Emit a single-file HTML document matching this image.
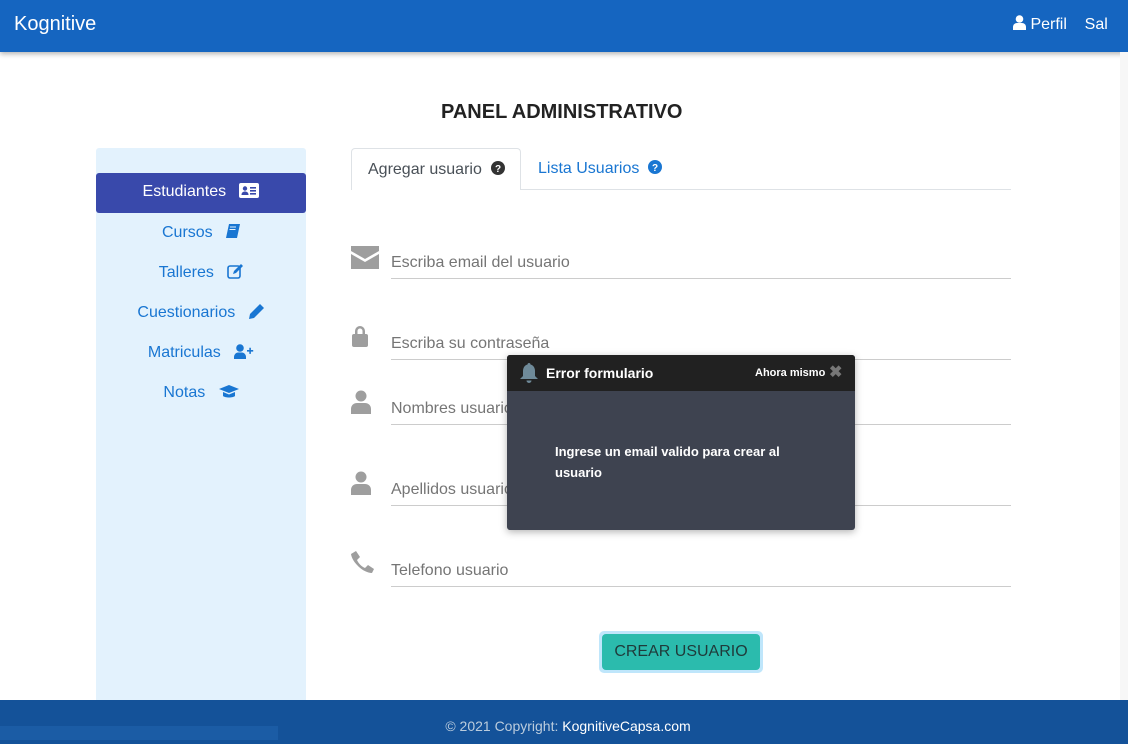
<!DOCTYPE html>
<html><head><meta charset="utf-8"><style>
*{margin:0;padding:0;box-sizing:border-box}
body{width:1128px;height:744px;position:relative;overflow:hidden;background:#fff;font-family:"Liberation Sans",sans-serif}
.a{position:absolute}
.hdr{left:0;top:0;width:1128px;height:52px;background:#1565c0;box-shadow:0 2px 5px rgba(0,0,0,.3)}
.side{left:96px;top:148px;width:210px;height:560px;background:#e3f2fd;border-radius:3px}
.nav{position:absolute;left:0;width:210px;text-align:center;color:#1976d2;font-size:16px;line-height:40px}
.fld{position:absolute;left:391px;width:620px;border-bottom:1px solid #ccc;color:#757575;font-size:16px;height:30px;line-height:28px}
.ic{position:absolute;fill:#9e9e9e}
</style></head><body>
<div class="a hdr"></div>
<div class="a" style="left:14px;top:13px;color:#fff;font-size:20px">Kognitive</div>
<div class="a" style="left:1013px;top:15px;color:#fff;font-size:16px"><svg width="13" height="15" viewBox="0 0 13 15" style="vertical-align:-1px;fill:#fff"><circle cx="6.5" cy="4" r="3.8"/><path d="M0 15v-3c0-2.5 2-4 4-4h5c2 0 4 1.5 4 4v3z"/></svg> Perfil &nbsp;&nbsp; Sal</div>
<div class="a" style="left:1120px;top:52px;width:8px;height:648px;background:#f7f7f7"></div>
<div class="a" style="left:441px;top:101px;font-size:20px;font-weight:bold;color:#222">PANEL ADMINISTRATIVO</div>
<div class="a side">
<div class="nav" style="top:25px;height:40px;background:#3949ab;color:#fff;border-radius:3px;line-height:38px">Estudiantes &nbsp;&nbsp;<svg width="20" height="15" viewBox="0 0 20 15" style="vertical-align:-2px"><rect width="20" height="15" rx="2" fill="#fff"/><circle cx="6" cy="5.5" r="2.2" fill="#3949ab"/><path d="M2.5 12c0-2.5 1.5-3.5 3.5-3.5s3.5 1 3.5 3.5z" fill="#3949ab"/><rect x="11" y="4" width="6" height="1.6" fill="#3949ab"/><rect x="11" y="7" width="6" height="1.6" fill="#3949ab"/><rect x="11" y="10" width="6" height="1.6" fill="#3949ab"/></svg></div>
<div class="nav" style="top:65px">Cursos &nbsp;&nbsp;<svg width="14" height="15" viewBox="0 0 14 15" style="vertical-align:-2px;fill:#1976d2"><path d="M3 0h11l-3 14H0z"/><path d="M4 3h6M3.5 5.5h6" stroke="#e3f2fd" stroke-width="1"/></svg></div>
<div class="nav" style="top:105px">Talleres &nbsp;&nbsp;<svg width="16" height="15" viewBox="0 0 16 15" style="vertical-align:-2px"><rect x="1" y="2" width="12" height="12" rx="2" fill="none" stroke="#1976d2" stroke-width="1.6"/><path d="M6 10l1-3 7-7 2 2-7 7z" fill="#1976d2"/></svg></div>
<div class="nav" style="top:145px">Cuestionarios &nbsp;&nbsp;<svg width="16" height="16" viewBox="0 0 16 16" style="vertical-align:-2px;fill:#1976d2"><path d="M0 16l1-5L11 1l4 4L5 15z"/></svg></div>
<div class="nav" style="top:185px">Matriculas &nbsp;&nbsp;<svg width="20" height="15" viewBox="0 0 20 15" style="vertical-align:-2px;fill:#1976d2"><circle cx="6" cy="4" r="3.8"/><path d="M0 15v-2c0-2.5 2-4.5 4-4.5h4c2 0 4 2 4 4.5v2z"/><path d="M13 6h2.3V3.7h1.6V6h2.3v1.6h-2.3v2.3h-1.6V7.6H13z"/></svg></div>
<div class="nav" style="top:225px">Notas &nbsp;&nbsp;<svg width="20" height="15" viewBox="0 0 20 15" style="vertical-align:-2px;fill:#1976d2"><path d="M10 1L0 5l10 4 10-4z"/><path d="M4 8v4c2 2 10 2 12 0V8l-6 2.5z"/></svg></div>
</div>
<!-- tabs -->
<div class="a" style="left:351px;top:189px;width:660px;border-bottom:1px solid #dee2e6"></div>
<div class="a" style="left:351px;top:148px;width:170px;height:42px;border:1px solid #dee2e6;border-bottom:none;background:#fff;border-radius:4px 4px 0 0;color:#495057;font-size:16px;line-height:41px;padding-left:16px">Agregar usuario &nbsp;<svg width="14" height="14" viewBox="0 0 14 14" style="vertical-align:-1px"><circle cx="7" cy="7" r="7" fill="#333"/><text x="7" y="11" text-anchor="middle" font-size="10" font-weight="bold" fill="#fff" font-family="Liberation Sans">?</text></svg></div>
<div class="a" style="left:538px;top:149px;color:#1976d2;font-size:16px;line-height:40px">Lista Usuarios &nbsp;<svg width="14" height="14" viewBox="0 0 14 14" style="vertical-align:-1px"><circle cx="7" cy="7" r="7" fill="#1976d2"/><text x="7" y="11" text-anchor="middle" font-size="10" font-weight="bold" fill="#fff" font-family="Liberation Sans">?</text></svg></div>
<!-- fields -->
<div class="fld" style="top:249px">Escriba email del usuario</div>
<div class="fld" style="top:330px">Escriba su contraseña</div>
<div class="fld" style="top:395px">Nombres usuario</div>
<div class="fld" style="top:476px">Apellidos usuario</div>
<div class="fld" style="top:557px">Telefono usuario</div>
<svg class="ic" style="left:351px;top:246px" width="28" height="23" viewBox="0 0 28 23"><path d="M0 0h28v5L14 13 0 5z"/><path d="M0 8l14 8 14-8v15H0z"/></svg>
<svg class="ic" style="left:351px;top:324px" width="18" height="23" viewBox="0 0 18 23"><path d="M4 10V7a5 5 0 0110 0v3h-2.5V7a2.5 2.5 0 00-5 0v3z"/><rect x="1" y="10" width="16" height="13" rx="2"/></svg>
<svg class="ic" style="left:351px;top:390px" width="20" height="24" viewBox="0 0 20 24"><circle cx="10" cy="6" r="5.5"/><path d="M0 24v-5c0-4 3-6 6-6h8c3 0 6 2 6 6v5z"/></svg>
<svg class="ic" style="left:351px;top:471px" width="20" height="24" viewBox="0 0 20 24"><circle cx="10" cy="6" r="5.5"/><path d="M0 24v-5c0-4 3-6 6-6h8c3 0 6 2 6 6v5z"/></svg>
<svg class="ic" style="left:351px;top:551px" width="23" height="23" viewBox="0 0 23 23"><path d="M5 0l4 6-3 3c1.5 3.5 4.5 6.5 8 8l3-3 6 4-2 4C12 22 1 11 0 3z"/></svg>
<!-- button -->
<div class="a" style="left:599px;top:631px;width:164px;height:42px;border-radius:5px;background:#bfe6fb"></div>
<div class="a" style="left:602px;top:634px;width:158px;height:36px;border-radius:4px;background:#2bbbad;color:#1f3a3a;font-size:16px;line-height:36px;text-align:center">CREAR USUARIO</div>
<!-- toast -->
<div class="a" style="left:507px;top:355px;width:348px;height:175px;background:#3e4350;border-radius:3px;box-shadow:0 2px 8px rgba(0,0,0,.3);overflow:hidden">
<div style="height:36px;background:#212121;color:#fff;position:relative">
<svg style="position:absolute;left:13px;top:8px" width="18" height="20" viewBox="0 0 18 20"><path d="M9 0c1 0 1.5.7 1.5 1.5C13.5 2.3 15 5 15 8v5l3 3H0l3-3V8c0-3 1.5-5.7 4.5-6.5C7.5.7 8 0 9 0zM6.5 17.5h5a2.5 2.5 0 01-5 0z" fill="#6f8a99"/></svg>
<span style="position:absolute;left:39px;top:10px;font-size:14px;font-weight:bold">Error formulario</span>
<span style="position:absolute;left:248px;top:12px;font-size:11px;font-weight:bold">Ahora mismo</span>
<span style="position:absolute;left:322px;top:7px;font-size:16px;color:#777;font-weight:bold">✖</span>
</div>
<div style="position:absolute;left:48px;top:86px;width:260px;color:#fff;font-size:13px;font-weight:bold;line-height:21px">Ingrese un email valido para crear al usuario</div>
</div>
<!-- footer -->
<div class="a" style="left:0;top:700px;width:1128px;height:44px;background:#145299"></div>
<div class="a" style="left:0;top:726px;width:278px;height:14px;background:#1b5ca5"></div>
<div class="a" style="left:0;top:718px;width:1128px;text-align:center;font-size:14px;color:#bcd;padding-left:8px">© 2021 Copyright: <span style="color:#fff">KognitiveCapsa.com</span></div>
</body></html>
